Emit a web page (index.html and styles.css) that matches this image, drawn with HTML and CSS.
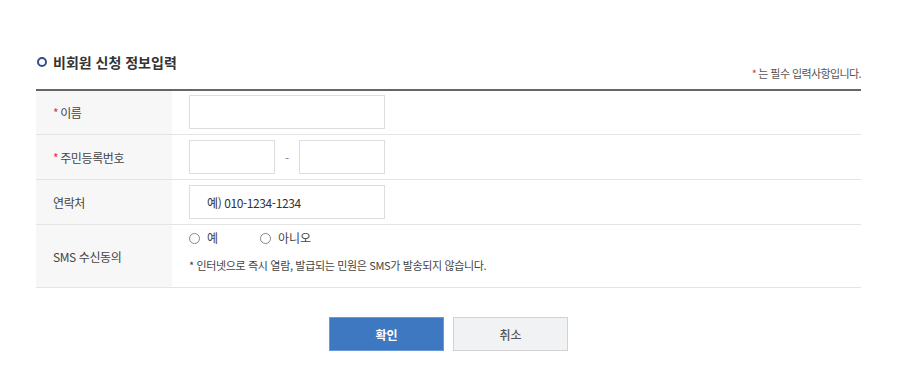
FILE: index.html
```html
<!DOCTYPE html>
<html lang="ko">
<head>
<meta charset="utf-8">
<title>비회원 신청 정보입력</title>
<link rel="stylesheet" href="styles.css">
</head>
<body>
<div class="wrap">
  <div class="head">
    <h2 class="title"><span class="ring"></span>비회원 신청 정보입력</h2>
    <p class="req-note"><span class="star">*</span>는 필수 입력사항입니다.</p>
  </div>
  <div class="form">
    <div class="row row-first">
      <div class="label"><span class="star">*</span>이름</div>
      <div class="value"><span class="field w-full"></span></div>
    </div>
    <div class="row">
      <div class="label"><span class="star">*</span>주민등록번호</div>
      <div class="value"><span class="field w-half"></span><span class="dash">-</span><span class="field w-half"></span></div>
    </div>
    <div class="row">
      <div class="label">연락처</div>
      <div class="value"><span class="field w-full text">예) 010-1234-1234</span></div>
    </div>
    <div class="row row-sms">
      <div class="label">SMS 수신동의</div>
      <div class="value value-sms">
        <div class="radios">
          <span class="opt"><span class="radio"></span>예</span>
          <span class="opt"><span class="radio"></span>아니오</span>
        </div>
        <p class="sms-note">* 인터넷으로 즉시 열람, 발급되는 민원은 SMS가 발송되지 않습니다.</p>
      </div>
    </div>
  </div>
  <div class="btns">
    <button class="btn btn-ok">확인</button>
    <button class="btn btn-cancel">취소</button>
  </div>
</div>
</body>
</html>
```
FILE: styles.css
```css
* { box-sizing: border-box; }
body {
  margin: 0;
  background: #fff;
  font-family: "Noto Sans CJK KR", "Noto Sans", sans-serif;
  color: #444;
  font-size: 12px;
}
.wrap {
  padding: 52px 62px 0 36px;
}
.head {
  display: flex;
  justify-content: space-between;
  align-items: flex-end;
  margin-bottom: 8px;
}
.title {
  margin: 0;
  padding-bottom: 9px;
  font-size: 14px;
  line-height: 20px;
  font-weight: 700;
  color: #333;
  display: flex;
  align-items: center;
  letter-spacing: 0;
}
.ring {
  width: 10px;
  height: 10px;
  border: 2px solid #2f4f8a;
  border-radius: 50%;
  margin: 0 6px 0 1px;
}
.req-note {
  margin: 0;
  font-size: 11px;
  line-height: 16px;
  color: #555;
  letter-spacing: -0.6px;
}
.star { color: #e3334f; margin-right: 2px; }
.form {
  border-top: 2px solid #666;
}
.row {
  display: grid;
  grid-template-columns: 136px 1fr;
  border-bottom: 1px solid #e4e4e4;
}
.label {
  background: #f7f7f7;
  padding-left: 17px;
  display: flex;
  align-items: center;
  color: #444;
  letter-spacing: -0.4px;
}
.value {
  padding: 5px 0 5px 17px;
  display: flex;
  align-items: center;
}
.row-first .value { padding-top: 4px; }
.field {
  display: flex;
  align-items: center;
  height: 34px;
  border: 1px solid #ddd;
  background: #fff;
}
.w-full { width: 196px; }
.w-half { width: 86px; }
.text { padding-left: 17px; color: #333; letter-spacing: -0.4px; }
.dash { width: 24px; text-align: center; color: #888; }
.value-sms {
  flex-direction: column;
  align-items: flex-start;
  padding: 5px 0 14px 17px;
}
.radios {
  display: flex;
  line-height: 16px;
}
.opt {
  display: flex;
  align-items: center;
  width: 71px;
  color: #444;
}
.radio {
  width: 11px;
  height: 11px;
  border: 1px solid #888;
  border-radius: 50%;
  margin-right: 7px;
  background: #fff;
}
.sms-note {
  margin: 11px 0 0;
  line-height: 16px;
  font-size: 11px;
  color: #444;
  letter-spacing: -0.35px;
}
.btns {
  display: flex;
  justify-content: center;
  gap: 9px;
  margin-top: 29px;
}
.btn {
  width: 115px;
  height: 34px;
  font-family: inherit;
  font-size: 12px;
  font-weight: 700;
  cursor: pointer;
}
.btn-ok {
  background: #3d78c1;
  border: 1px solid #6a9ad6;
  color: #fff;
}
.btn-cancel {
  background: #f1f2f4;
  border: 1px solid #d2d2d2;
  color: #555;
  font-weight: 500;
}
```
